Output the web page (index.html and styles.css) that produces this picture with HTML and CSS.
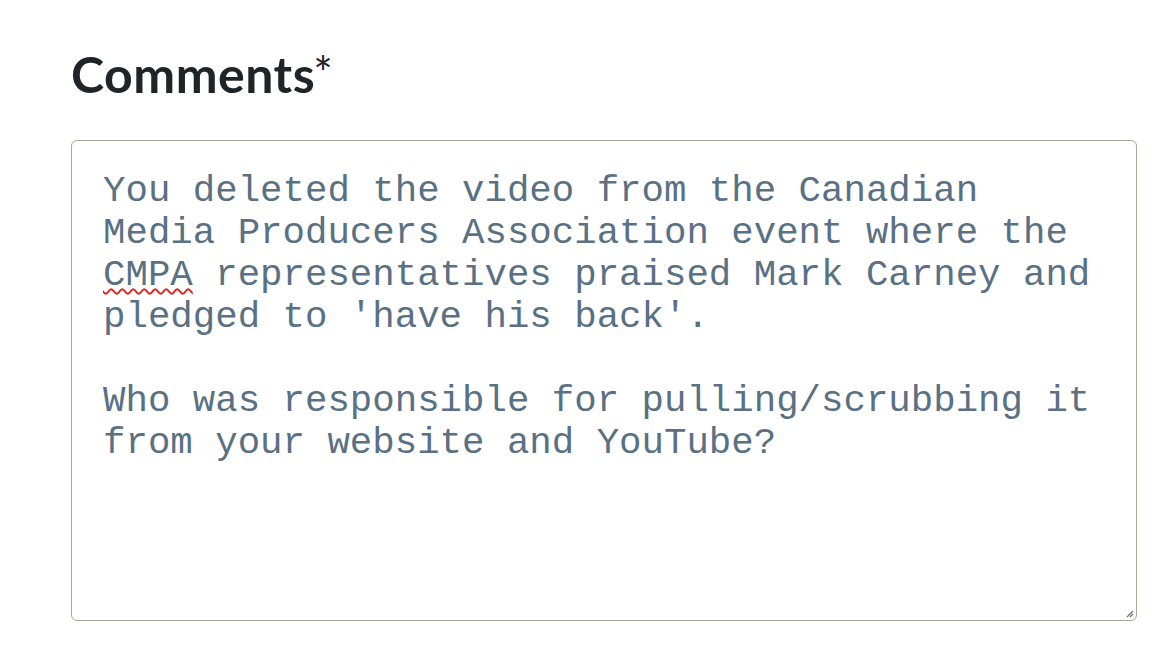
FILE: index.html
```html
<!DOCTYPE html>
<html lang="en">
<head>
<meta charset="utf-8">
<title>Comments</title>
<link rel="stylesheet" href="styles.css">
</head>
<body>
<main class="form">
  <label class="label" for="comments">Comments<span class="req">*</span></label>
  <div class="field" id="comments" role="textbox" aria-multiline="true">
    <div class="text">You deleted the video from the Canadian Media Producers Association event where the <span class="misspelt">CMPA</span> representatives praised Mark Carney and pledged to 'have his back'.

Who was responsible for pulling/scrubbing it from your website and YouTube?</div>
    <svg class="grip" width="8" height="8" viewBox="0 0 8 8" aria-hidden="true">
      <path d="M7 1 L1 7 M7 4 L4 7" stroke="#6b6b6b" stroke-width="1.2" fill="none"/>
    </svg>
  </div>
</main>
</body>
</html>
```
FILE: styles.css
```css
html, body {
  margin: 0;
  padding: 0;
  background: #ffffff;
}
.form {
  padding: 44px 0 0 71px;
  width: 1066px;
  display: flex;
  flex-direction: column;
}
.label {
  font-family: "Lato", "Noto Sans", sans-serif;
  font-weight: 700;
  font-size: 50px;
  line-height: 60px;
  color: #1f2429;
  letter-spacing: 0.5px;
  margin-bottom: 36px;
}
.req {
  font-weight: 400;
  font-size: 46px;
  vertical-align: top;
  line-height: 30px;
  position: relative;
  top: 14px;
  margin-left: -2px;
}
.field {
  position: relative;
  box-sizing: border-box;
  width: 1066px;
  height: 481px;
  border: 1px solid #a9a697;
  border-radius: 6px;
  padding: 29px 31px 17px;
}
.text {
  font-family: "Liberation Mono", "DejaVu Sans Mono", monospace;
  font-size: 37.4px;
  line-height: 42px;
  color: #5a7083;
  white-space: pre-wrap;
}
.misspelt {
  text-decoration: underline wavy #e0201c;
  text-decoration-thickness: 1.6px;
  text-underline-offset: 3px;
}
.grip {
  position: absolute;
  right: 2px;
  bottom: 2px;
}
```
